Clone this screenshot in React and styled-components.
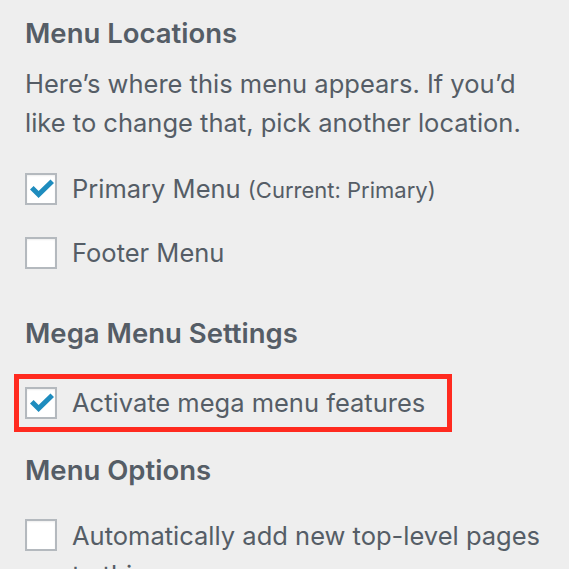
import React from "react";
import styled, { createGlobalStyle } from "styled-components";

const GlobalStyle = createGlobalStyle`
  html, body {
    margin: 0;
    padding: 0;
    background: #eeeeee;
  }
  body {
    font-family: Inter, "Noto Sans", "Liberation Sans", sans-serif;
    color: #555d66;
  }
`;

const Panel = styled.div`
  width: 569px;
  height: 569px;
  overflow: hidden;
  box-sizing: border-box;
  padding: 17px 20px 0 25px;
`;

const Heading = styled.h3`
  margin: ${(p) => p.$mt || 0}px 0 0;
  font-size: 27.5px;
  line-height: 32px;
  font-weight: 600;
  color: #555d66;
`;

const Description = styled.p`
  margin: 15px 0 0;
  font-size: 25.5px;
  line-height: 39px;
`;

const List = styled.div`
  display: flex;
  flex-direction: column;
  gap: 31px;
  margin-top: ${(p) => p.$mt || 0}px;
`;

const Row = styled.label`
  display: flex;
  align-items: flex-start;
  gap: 15px;
  font-size: 25.5px;
  line-height: 32px;
`;

const Box = styled.span`
  flex: none;
  width: 32px;
  height: 32px;
  margin-top: ${(p) => p.$offset || 0}px;
  box-sizing: border-box;
  border: 2px solid #b4b9be;
  background: #fff;
  display: flex;
  align-items: center;
  justify-content: center;
  box-shadow: inset 0 1px 2px rgba(0, 0, 0, 0.07);
`;

const LabelText = styled.span`
  line-height: ${(p) => p.$lh || 32}px;
`;

const Small = styled.span`
  font-size: 22px;
`;

const Highlight = styled.div`
  margin: 25px 0 0 -11px;
  width: 438px;
  box-sizing: border-box;
  border: 5px solid #ff2a1f;
  padding: 8px 6px;
`;

const Check = () => (
  <svg width="26" height="22" viewBox="0 0 26 22" style={{ marginTop: -1, marginLeft: 2 }}>
    <path
      d="M1 11.5 L4.6 8 L9.6 13 L21.5 1.5 L25 5 L9.6 20 Z"
      fill="#1e8cbe"
    />
  </svg>
);

const Checkbox = ({ checked, children, lh }) => (
  <Row>
    <Box $offset={lh ? (lh - 32) / 2 - 1 : 0}>{checked && <Check />}</Box>
    <LabelText $lh={lh}>{children}</LabelText>
  </Row>
);

const App = () => (
  <>
    <GlobalStyle />
    <Panel>
      <Heading>Menu Locations</Heading>
      <Description>
        Here’s where this menu appears. If you’d like to change that, pick
        another location.
      </Description>
      <List $mt={31}>
        <Checkbox checked>
          Primary Menu <Small>(Current: Primary)</Small>
        </Checkbox>
        <Checkbox>Footer Menu</Checkbox>
      </List>
      <Heading $mt={48}>Mega Menu Settings</Heading>
      <Highlight>
        <Checkbox checked>Activate mega menu features</Checkbox>
      </Highlight>
      <Heading $mt={22}>Menu Options</Heading>
      <List $mt={30}>
        <Checkbox lh={39}>
          Automatically add new top-level pages to this menu
        </Checkbox>
      </List>
    </Panel>
  </>
);

export default App;
